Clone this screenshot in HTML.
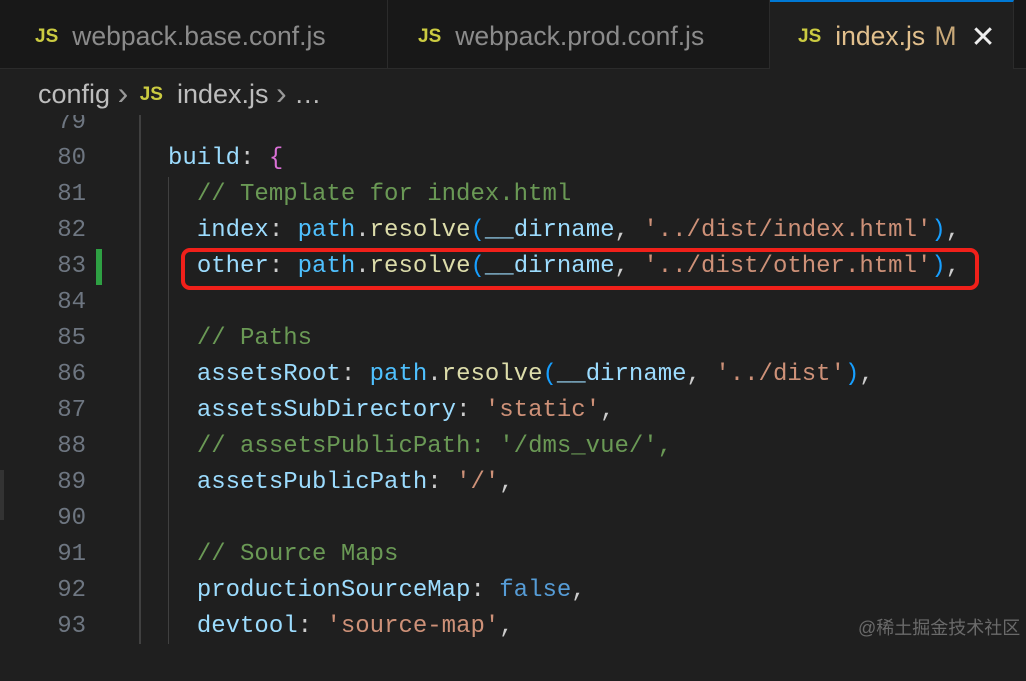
<!DOCTYPE html>
<html><head><meta charset="utf-8"><style>
*{margin:0;padding:0;box-sizing:border-box}
body{width:1026px;height:644px;background:#1f1f1f;overflow:hidden;position:relative;font-family:"Liberation Sans",sans-serif}
.tabs{position:absolute;left:0;top:0;width:1026px;height:69px;background:#181818;border-bottom:1px solid #2b2b2b}
.tab{position:absolute;top:0;height:69px;border-right:1px solid #2b2b2b;color:#8b8b8b;font-size:26.5px;line-height:72px;white-space:nowrap}
.js{color:#cbcb41;font-weight:bold;font-size:19px;margin-right:14px;vertical-align:3px}
.crumb{position:absolute;left:38px;top:73px;font-size:27px;color:#bdbdbd;line-height:40px;white-space:nowrap}
.ch{color:#999;font-size:32px;vertical-align:-1px}
.code{position:absolute;left:0;top:105px;font-family:"Liberation Mono",monospace;font-size:24px;line-height:36px;white-space:pre}
.ln{position:absolute;left:0;width:86px;text-align:right;color:#6e7681}
.cl{position:absolute;left:168px;color:#ccc}
.p{color:#9cdcfe}.f{color:#dcdcaa}.s{color:#ce9178}.c{color:#6a9955}.b{color:#da70d6}.pa{color:#179fff}.v{color:#4fc1ff}.k{color:#569cd6}
</style></head><body>
<div class="tabs">
 <div class="tab" style="left:0;width:388px;padding-left:35px"><span class="js">JS</span>webpack.base.conf.js</div>
 <div class="tab" style="left:388px;width:382px;padding-left:30px"><span class="js">JS</span>webpack.prod.conf.js</div>
 <div class="tab" style="left:770px;width:244px;background:#1f1f1f;border-top:2px solid #0078d4;height:70px;padding-left:28px;line-height:68px;color:#e2c08d"><span class="js">JS</span>index.js <span style="margin-left:2px;color:#c8a878">M</span><span style="color:#eee;margin-left:14px;font-size:30px;vertical-align:-2px">✕</span></div>
</div>
<div style="position:absolute;left:139px;top:115px;width:2px;height:529px;background:#404040"></div>
<div style="position:absolute;left:168px;top:177px;width:1px;height:467px;background:#404040"></div>
<div style="position:absolute;left:96px;top:249px;width:6px;height:36px;background:#2ea043"></div>
<div style="position:absolute;left:0;top:470px;width:4px;height:50px;background:#333"></div>
<div class="code">
<div class="ln" style="top:0">79</div>
<div class="ln" style="top:36px">80</div><div class="cl" style="top:36px"><span class="p">build</span>: <span class="b">{</span></div>
<div class="ln" style="top:72px">81</div><div class="cl" style="top:72px">  <span class="c">// Template for index.html</span></div>
<div class="ln" style="top:108px">82</div><div class="cl" style="top:108px">  <span class="p">index</span>: <span class="v">path</span>.<span class="f">resolve</span><span class="pa">(</span><span class="p">__dirname</span>, <span class="s">'../dist/index.html'</span><span class="pa">)</span>,</div>
<div class="ln" style="top:144px">83</div><div class="cl" style="top:144px">  <span class="p">other</span>: <span class="v">path</span>.<span class="f">resolve</span><span class="pa">(</span><span class="p">__dirname</span>, <span class="s">'../dist/other.html'</span><span class="pa">)</span>,</div>
<div class="ln" style="top:180px">84</div>
<div class="ln" style="top:216px">85</div><div class="cl" style="top:216px">  <span class="c">// Paths</span></div>
<div class="ln" style="top:252px">86</div><div class="cl" style="top:252px">  <span class="p">assetsRoot</span>: <span class="v">path</span>.<span class="f">resolve</span><span class="pa">(</span><span class="p">__dirname</span>, <span class="s">'../dist'</span><span class="pa">)</span>,</div>
<div class="ln" style="top:288px">87</div><div class="cl" style="top:288px">  <span class="p">assetsSubDirectory</span>: <span class="s">'static'</span>,</div>
<div class="ln" style="top:324px">88</div><div class="cl" style="top:324px">  <span class="c">// assetsPublicPath: '/dms_vue/',</span></div>
<div class="ln" style="top:360px">89</div><div class="cl" style="top:360px">  <span class="p">assetsPublicPath</span>: <span class="s">'/'</span>,</div>
<div class="ln" style="top:396px">90</div>
<div class="ln" style="top:432px">91</div><div class="cl" style="top:432px">  <span class="c">// Source Maps</span></div>
<div class="ln" style="top:468px">92</div><div class="cl" style="top:468px">  <span class="p">productionSourceMap</span>: <span class="k">false</span>,</div>
<div class="ln" style="top:504px">93</div><div class="cl" style="top:504px">  <span class="p">devtool</span>: <span class="s">'source-map'</span>,</div>
</div>
<div style="position:absolute;left:0;top:69px;width:1026px;height:46px;background:#1f1f1f;z-index:1"></div>
<div class="crumb" style="z-index:2">config <span class="ch">›</span> <span class="js" style="margin-left:4px">JS</span>index.js <span class="ch">›</span> …</div>
<div style="position:absolute;left:181px;top:248px;width:798px;height:42px;border:4px solid #f0201a;border-radius:9px"></div>
<div style="position:absolute;left:858px;top:614px;font-family:'Liberation Sans','Noto Sans CJK SC',sans-serif;font-size:18px;color:#6a6a6a">@稀土掘金技术社区</div>
</body></html>
